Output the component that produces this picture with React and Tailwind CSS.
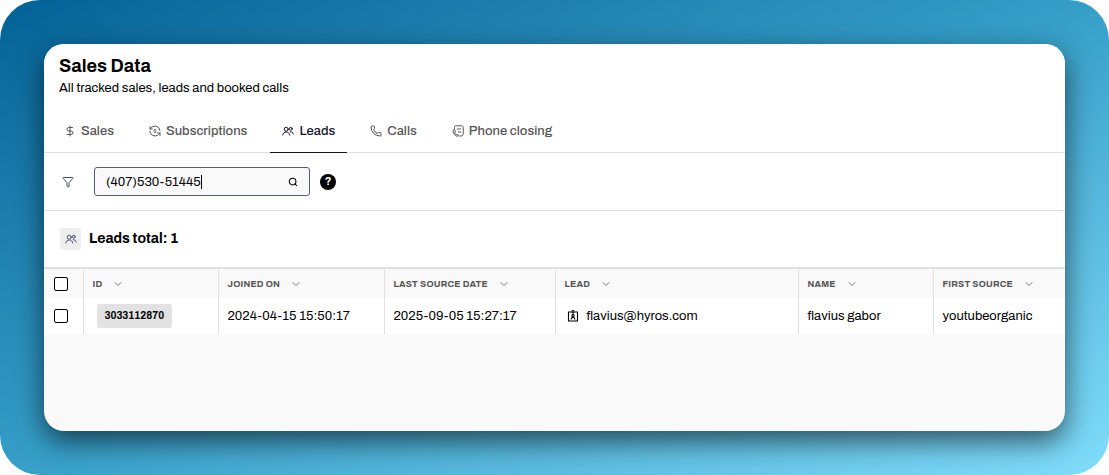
import React, { useState } from 'react';
import { ChevronDown, DollarSign, Filter, Phone, Search } from 'lucide-react';

const UsersIcon = ({ className }) => (
  <svg viewBox="0 0 24 24" fill="none" stroke="currentColor" strokeWidth="2" strokeLinecap="round" strokeLinejoin="round" className={className} aria-hidden="true">
    <circle cx="8.5" cy="8.5" r="4" />
    <path d="M1.500 20c.6-4 3.400-6 7-6s6.400 2 7 6" />
    <circle cx="17.5" cy="7.5" r="2.8" />
    <path d="M16.500 13.500c3.200-.4 5.600 1.300 6 4.500" />
  </svg>
);

const SubscriptionIcon = ({ className }) => (
  <svg viewBox="0 0 24 24" fill="none" stroke="currentColor" strokeWidth="2" strokeLinecap="round" strokeLinejoin="round" className={className} aria-hidden="true">
    <path d="M2 3.500v4.500h4.500M2.500 8A10.300 10.300 0 0 1 22 11M1.700 12.500A10.300 10.300 0 0 0 18 20M22 21v-5h-5M22 16l-1.500 2" />
    <path d="M14 10c-.4-.8-1.100-1.200-2-1.200-1.200 0-2 .6-2 1.500 0 2.200 4.200 1.200 4.200 3.400 0 1-.9 1.500-2.200 1.500-1 0-1.800-.4-2.200-1.200" strokeWidth="1.8" />
  </svg>
);

const PhoneClosingIcon = ({ className }) => (
  <svg viewBox="0 0 24 24" fill="none" stroke="currentColor" strokeWidth="2" strokeLinecap="round" strokeLinejoin="round" className={className} aria-hidden="true">
    <path d="M5 7V5c0-2.500 1.200-3.500 3.500-3.500h10C21 1.500 22.500 3 22.500 5.500v12c0 3-1.500 4.500-4.500 4.500h-3" />
    <path d="M10.500 8h7M12.500 14h5" />
    <path d="M2.500 10.500c-1.500 4.500 3 11.500 8 12 1.500.2 2.500-.8 2.300-2l-2.800-2-1.500 1c-1.500-.8-2.800-2.700-3.200-4.500l1.700-1.200L5.500 10z" />
  </svg>
);

const BadgeIcon = ({ className }) => (
  <svg viewBox="0 0 24 24" fill="none" stroke="currentColor" strokeWidth="2.2" strokeLinejoin="round" className={className} aria-hidden="true">
    <path d="M9 4H3v18h18V4h-6" />
    <circle cx="12" cy="3.5" r="2.2" />
    <circle cx="12" cy="11" r="2.2" />
    <path d="M8.500 19c0-3 1.200-4.500 3.500-4.500s3.500 1.500 3.500 4.500" />
  </svg>
);

const tabs = [
  { name: 'Sales', icon: DollarSign },
  { name: 'Subscriptions', icon: SubscriptionIcon },
  { name: 'Leads', icon: UsersIcon },
  { name: 'Calls', icon: Phone },
  { name: 'Phone closing', icon: PhoneClosingIcon },
];

const columns = [
  { name: 'ID', width: 'w-[135px]' },
  { name: 'Joined on', width: 'w-[166px]' },
  { name: 'Last source date', width: 'w-[171px]' },
  { name: 'Lead', width: 'w-[243px]' },
  { name: 'Name', width: 'w-[135px]' },
  { name: 'First source', width: '' },
];

const leads = [
  {
    id: '3033112870',
    joined: '2024-04-15 15:50:17',
    lastSource: '2025-09-05 15:27:17',
    email: 'flavius@hyros.com',
    name: 'flavius gabor',
    firstSource: 'youtubeorganic',
  },
];

const Checkbox = ({ label }) => (
  <input
    type="checkbox"
    aria-label={label}
    className="block ml-[10px] w-[14px] h-[14px] appearance-none rounded-xs border border-black bg-white checked:bg-black"
  />
);

const App = () => {
  const [activeTab, setActiveTab] = useState('Leads');
  const [search, setSearch] = useState('(407)530-51445');

  return (
    <div className="min-h-screen flex flex-col p-11 rounded-[40px] bg-linear-to-br from-[#026297] via-[#369fc8] to-[#80dcfa] font-['Archivo','Liberation_Sans',sans-serif] text-black">
      <main className="flex-1 flex flex-col overflow-hidden rounded-[20px] bg-[#f9f9f9] shadow-[0_10px_28px_rgba(0,0,0,0.6)]">
        <header className="bg-white px-[15px] pt-3">
          <h1 className="text-lg leading-5 font-bold">Sales Data</h1>
          <p className="mt-1 text-[13px] leading-4">All tracked sales, leads and booked calls</p>
        </header>

        {/* Tabs */}
        <nav className="flex gap-[11px] bg-white px-2 pt-[14px] border-b border-[#e0e0e0]">
          {tabs.map(({ name, icon: Icon }) => (
            <button
              key={name}
              onClick={() => setActiveTab(name)}
              className={`-mb-px flex h-[43px] items-center gap-[5px] px-3 border-b text-[13px] leading-4 font-medium ${
                activeTab === name ? 'border-[#14142b] text-[#14142b]' : 'border-transparent text-[#555]'
              }`}
            >
              <Icon className="w-3 h-3" />
              {name}
            </button>
          ))}
        </nav>

        {/* Search */}
        <div className="flex h-[58px] items-center bg-white px-[18px] border-b border-[#e0e0e0]">
          <button aria-label="Filter" className="text-[#4a4a75]">
            <Filter className="w-3 h-3" />
          </button>
          <div className="ml-5 flex h-[29px] w-[216px] items-center rounded-[3px] border border-[#5a5a80] bg-[#f9f9f9] px-[11px]">
            <input
              type="text"
              aria-label="Search leads"
              value={search}
              onChange={(e) => setSearch(e.target.value)}
              className="field-sizing-content min-w-4 max-w-44 bg-transparent text-[13px] leading-4 caret-transparent outline-none"
            />
            <span className="h-[14px] w-px bg-black" />
            <button aria-label="Search" className="ml-auto">
              <Search className="w-[10px] h-[10px]" strokeWidth={2.5} />
            </button>
          </div>
          <button aria-label="Help" className="ml-[10px] flex h-4 w-4 items-center justify-center rounded-full bg-black text-[11px] font-bold text-white">
            ?
          </button>
        </div>

        {/* Total */}
        <div className="flex h-14 items-center gap-2 bg-white px-4">
          <span className="flex h-[22px] w-[21px] items-center justify-center rounded-[3px] bg-[#eee] text-[#4a4a75]">
            <UsersIcon className="w-3 h-3" />
          </span>
          <h2 className="text-sm font-bold">Leads total: 1</h2>
        </div>

        <table className="w-full table-fixed text-left">
          <thead>
            <tr className="h-[30px] border-t-2 border-[#e0e0e0]">
              <th className="w-[39px] p-0"><Checkbox label="Select all leads" /></th>
              {columns.map((column) => (
                <th key={column.name} className={`${column.width} border-l border-[#e0e0e0] p-0 pl-[9px]`}>
                  <button className="flex items-center gap-[10px] text-[9px] leading-4 font-bold tracking-wide uppercase whitespace-nowrap text-[#555]">
                    {column.name}
                    <ChevronDown className="w-3 h-3 text-[#777]" strokeWidth={2} />
                  </button>
                </th>
              ))}
            </tr>
          </thead>
          <tbody className="bg-white text-[13px] leading-4 whitespace-nowrap">
            {leads.map((lead) => (
              <tr key={lead.id} className="h-9">
                <td className="p-0"><Checkbox label={`Select lead ${lead.id}`} /></td>
                <td className="border-l border-[#e0e0e0] p-0 pl-[13px]">
                  <span className="flex h-6 w-fit items-center rounded-[3px] bg-[#e2e2e2] px-2 text-[10px] font-bold">{lead.id}</span>
                </td>
                <td className="border-l border-[#e0e0e0] p-0 pl-[9px]">{lead.joined}</td>
                <td className="border-l border-[#e0e0e0] p-0 pl-[9px]">{lead.lastSource}</td>
                <td className="border-l border-[#e0e0e0] p-0 pl-[11px]">
                  <span className="flex items-center gap-2">
                    <BadgeIcon className="w-3 h-3" />
                    {lead.email}
                  </span>
                </td>
                <td className="border-l border-[#e0e0e0] p-0 pl-[9px]">{lead.name}</td>
                <td className="border-l border-[#e0e0e0] p-0 pl-[9px]">{lead.firstSource}</td>
              </tr>
            ))}
          </tbody>
        </table>
      </main>
    </div>
  );
};

export default App;
